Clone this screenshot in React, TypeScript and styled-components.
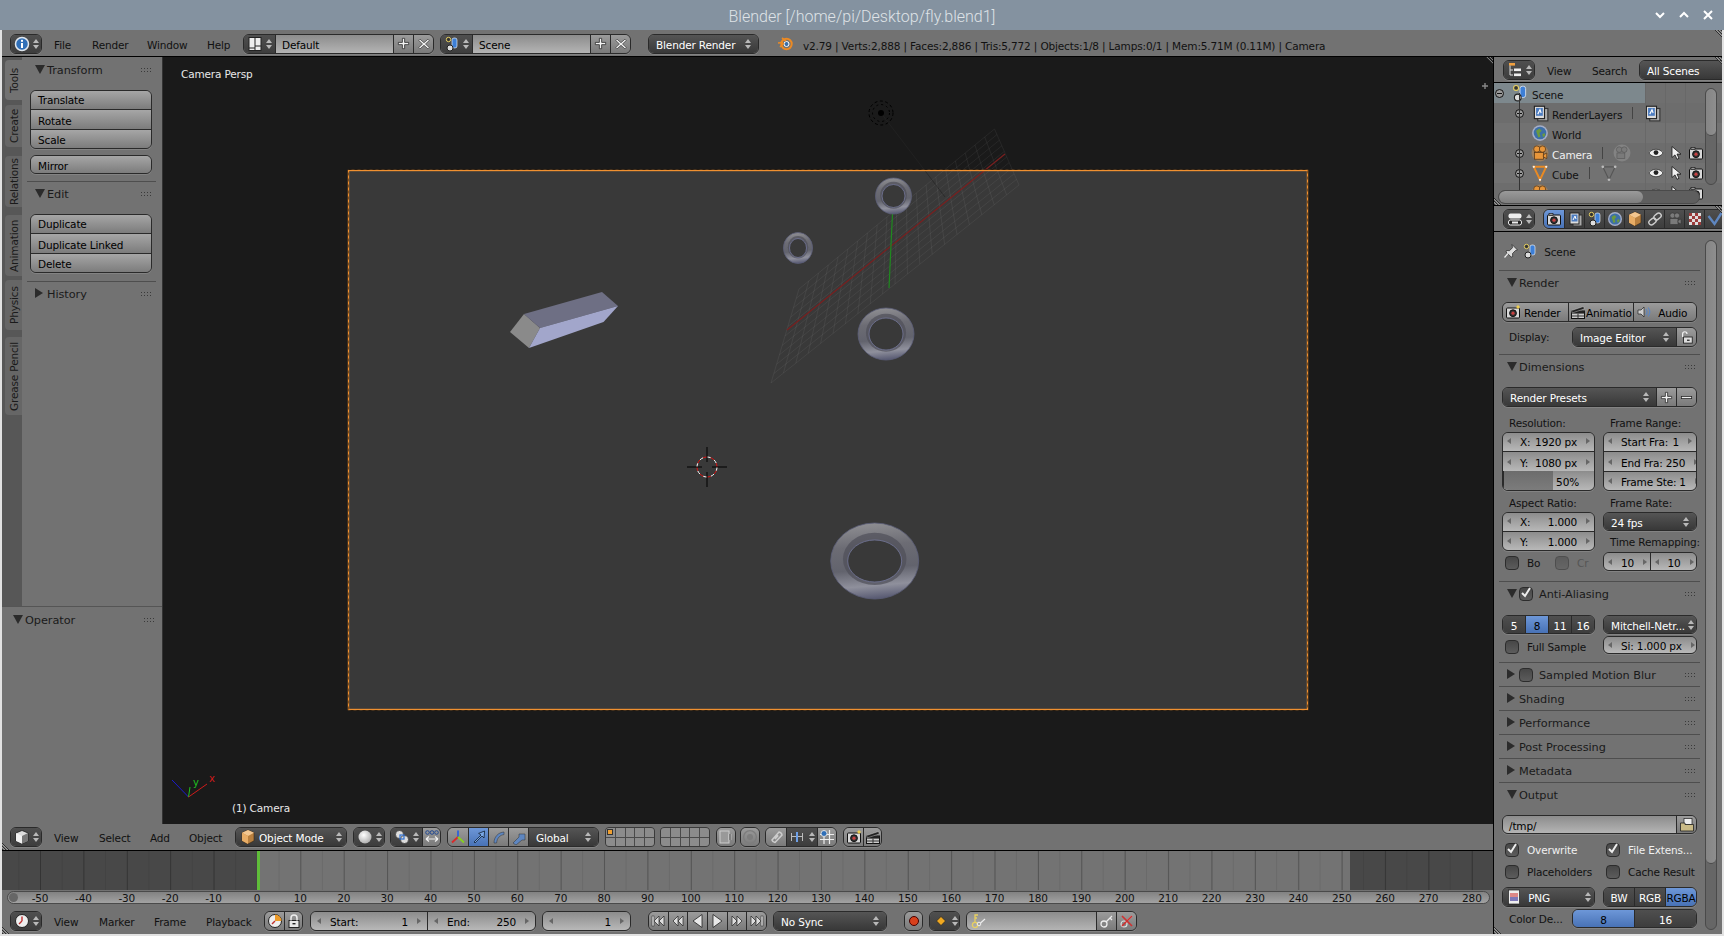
import React from 'react';
import styled, { createGlobalStyle, css } from 'styled-components';

const Global = createGlobalStyle`
  * { box-sizing: border-box; }
  html, body { margin: 0; padding: 0; overflow: hidden; background: #e2e2e2; }
  body { font-family: "DejaVu Sans", "Liberation Sans", sans-serif; font-size: 10.5px; letter-spacing: -0.15px; }
`;

const Page = styled.div`width:1724px;height:936px;display:flex;flex-direction:column;`;
const TitleBar = styled.header`
  height:30px;flex:none;background:#8492a0;display:flex;align-items:center;justify-content:center;position:relative;padding-top:2px;
  color:#dfe3e7;font:300 16px Roboto, sans-serif;letter-spacing:0;
`;
const WinButtons = styled.div`position:absolute;right:8px;top:9px;display:flex;gap:8px;`;
const Work = styled.div`flex:1;min-height:0;display:flex;flex-direction:column;padding:0 2px 2px 2px;`;
const Header = styled.div<{ $h?: number; $top?: number }>`
  height:${p => p.$h ?? 27}px;flex:none;display:flex;align-items:center;background:#727272;color:#000;
  border-bottom:1px solid #000;padding:${p => p.$top ?? 0}px 0 0 8px;position:relative;
  ${p => p.$h === 29 && css`border-bottom:none;`}
`;
const MenuItem = styled.div<{ $w: number }>`width:${p => p.$w}px;flex:none;padding:2px 0 0 12px;color:#111;white-space:nowrap;`;
const Gap = styled.div<{ $w: number }>`width:${p => p.$w}px;flex:none;`;
const Stats = styled.div`color:#111;white-space:nowrap;margin-left:10px;padding-top:4px;`;
const Body = styled.div`flex:1;min-height:0;display:flex;`;
const LeftCol = styled.div`width:1491px;flex:none;display:flex;flex-direction:column;`;
const RightCol = styled.div`flex:1;min-width:0;display:flex;flex-direction:column;border-left:1px solid #000;`;

const ViewArea = styled.div`flex:1;min-height:0;display:flex;`;
const Side = styled.div`width:160px;flex:none;display:flex;flex-direction:column;background:#727272;`;
const SideTop = styled.div`height:550px;flex:none;display:flex;border-bottom:1px solid #555;`;
const Tabs = styled.div`width:20px;flex:none;background:#575757;padding:3px 0 0 3px;display:flex;flex-direction:column;`;
const Tab = styled.div<{ $h: number; $on?: boolean; $mb: number }>`
  height:${p => p.$h}px;margin-bottom:${p => p.$mb}px;flex:none;writing-mode:vertical-rl;transform:rotate(180deg);
  display:flex;align-items:center;justify-content:center;color:#1a1a1a;border-radius:0 4px 4px 0;
  background:${p => (p.$on ? '#727272' : '#666')};
  ${p => p.$on && css`margin-right:-1px;`}
`;
const ToolPanels = styled.div`flex:1;padding:1px 6px 0 5px;`;
const Viewport = styled.main`flex:1;position:relative;background:#1a1a1a;overflow:hidden;border-left:1px solid #333;`;
const Scene3D = styled.svg`position:absolute;left:-1px;top:0;display:block;`;
const AxisLetter = styled.text`font-family:"DejaVu Sans",sans-serif;font-size:10px;letter-spacing:0;`;
const ViewLabel = styled.div<{ $x: number; $y: number }>`position:absolute;left:${p => p.$x}px;top:${p => p.$y}px;color:#e8e8e8;white-space:nowrap;`;

const Section = styled.section<{ $bare?: boolean }>`
  ${p => !p.$bare && css`border-bottom:1px solid #4e4e4e;`}
`;
const PanelHead = styled.div`height:23px;display:flex;align-items:center;color:#1a1a1a;font-size:11.3px;letter-spacing:-.05px;padding:1px 5px 0 8px;`;
const Tri = styled.span<{ $open?: boolean }>`
  width:0;height:0;flex:none;margin-top:-2px;
  ${p => p.$open
    ? css`border-left:5px solid transparent;border-right:5px solid transparent;border-top:9px solid #2b2b2b;margin-right:2px;`
    : css`border-top:5px solid transparent;border-bottom:5px solid transparent;border-left:8px solid #2b2b2b;margin-right:4px;`}
`;
const Grip = styled.span`
  margin-left:auto;width:11px;height:5px;flex:none;margin-top:-1px;
  background-image:radial-gradient(circle,#3a3a3a 0.8px,transparent 0.9px);background-size:3px 3px;
`;
const PanelBody = styled.div<{ $pad: string }>`padding:${p => p.$pad};display:flex;flex-direction:column;`;

const kinds: Record<string, any> = {
  tool: css`background:linear-gradient(#a6a6a6,#7c7c7c);color:#000;`,
  menu: css`background:linear-gradient(#555,#383838);color:#fff;`,
  num: css`background:linear-gradient(#8c8c8c,#b8b8b8);color:#000;`,
  text: css`background:linear-gradient(#8c8c8c,#b4b4b4);color:#000;`,
  toggle: css`background:linear-gradient(#9b9b9b,#7a7a7a);color:#000;`,
  dark: css`background:linear-gradient(#4f4f4f,#3d3d3d);color:#fff;`,
  active: css`background:linear-gradient(#6d97d8,#4872b6);color:#000;`,
};
const Join = styled.div<{ $col?: boolean; $w?: number; $ml?: number; $mt?: number; $mb?: number; $grow?: boolean }>`
  display:flex;flex-direction:${p => (p.$col ? 'column' : 'row')};flex:${p => (p.$grow ? 1 : 'none')};min-width:0;
  ${p => p.$w && css`width:${p.$w}px;`} margin-left:${p => p.$ml ?? 0}px;margin-top:${p => p.$mt ?? 0}px;margin-bottom:${p => p.$mb ?? 0}px;
  border:1px solid #2a2a2a;border-radius:6px;overflow:hidden;
  box-shadow:0 1px 0 rgba(255,255,255,.12);
`;
const Seg = styled.div<{ $k?: string; $w?: number; $h?: number; $grow?: boolean; $center?: boolean; $pad?: number }>`
  ${p => kinds[p.$k ?? 'tool']}
  height:${p => p.$h ?? 18}px;flex:${p => (p.$grow ? '1 1 0' : 'none')};min-width:0;${p => p.$w && css`width:${p.$w}px;`}
  display:flex;align-items:center;white-space:nowrap;overflow:hidden;position:relative;gap:3px;
  justify-content:${p => (p.$center ? 'center' : 'flex-start')};
  padding:${p => (p.$center ? '2px 0 0' : `2px ${p.$pad ?? 7}px 0`)};
  & + & {border-left:1px solid #2a2a2a;}
  ${Join}[data-col] > & {height:20px;flex:none;}
  ${Join}[data-col] > &:first-child {height:18px;padding-top:0;}
  ${Join}[data-col] > &:last-child {height:19px;}
  ${Join}[data-col] > & + & {border-left:none;border-top:1px solid #2a2a2a;}
`;
const Spin = styled.span`
  margin-left:auto;margin-top:-2px;flex:none;display:flex;flex-direction:column;gap:2px;
  &::before,&::after{content:"";width:0;height:0;border-left:3px solid transparent;border-right:3px solid transparent;}
  &::before{border-bottom:4px solid #b9b9b9;}
  &::after{border-top:4px solid #b9b9b9;}
`;
const Arr = styled.span<{ $r?: boolean }>`
  flex:none;width:0;height:0;margin-top:-2px;border-top:3px solid transparent;border-bottom:3px solid transparent;
  ${p => p.$r ? css`border-left:4px solid #666;margin-left:6px;` : css`border-right:4px solid #666;margin-right:6px;`}
`;
const NumVal = styled.span`margin-left:auto;position:relative;`;

const Outliner = styled.div`height:123px;flex:none;position:relative;overflow:hidden;background:#727272;border-bottom:1px solid #000;`;
const Row = styled.div<{ $alt?: boolean; $sel?: boolean }>`
  height:20px;display:flex;align-items:center;color:#111;position:relative;padding-top:2px;
  background:${p => (p.$sel ? 'linear-gradient(90deg,#7d888d 151px,#6f6f6f 151px)' : p.$alt ? '#6d6d6d' : '#727272')};
`;
const RowIndent = styled.div<{ $w: number }>`width:${p => p.$w}px;flex:none;display:flex;justify-content:flex-end;`;
const Expand = styled.span<{ $minus?: boolean }>`
  width:9px;height:9px;border-radius:50%;border:1px solid #111;background:#999;flex:none;position:relative;margin-top:-2px;
  &::before{content:"";position:absolute;left:1px;right:1px;top:3px;height:1px;background:#111;}
  ${p => !p.$minus && css`&::after{content:"";position:absolute;top:1px;bottom:1px;left:3px;width:1px;background:#111;}`}
`;
const RowText = styled.span<{ $white?: boolean }>`margin-left:3px;padding-top:2px;white-space:nowrap;color:${p => (p.$white ? '#f0f0f0' : '#111')};`;
const Tick = styled.span`width:1px;height:12px;background:#444;margin:-2px 10px 0;flex:none;`;
const RestrictCols = styled.div`position:absolute;left:151px;top:0;width:60px;height:100%;display:flex;`;
const Restrict = styled.div`width:20px;display:flex;align-items:center;justify-content:center;border-left:1px solid #686868;padding-top:2px;`;
const TreeLine = styled.div`position:absolute;left:25px;top:10px;width:1px;height:110px;background:#333;z-index:1;`;
const VScroll = styled.div<{ $top: number; $h: number; $thumb: number }>`
  position:absolute;right:5px;top:${p => p.$top}px;width:12px;height:${p => p.$h}px;border:1px solid #4a4a4a;border-radius:6px;background:#666;overflow:hidden;z-index:2;
  &::before{content:"";display:block;height:${p => p.$thumb}px;background:linear-gradient(90deg,#858585,#8e8e8e);border-radius:5px;border-bottom:1px solid #4a4a4a;}
`;
const HScroll = styled.div`
  position:absolute;left:4px;bottom:1px;width:202px;height:14px;border:1px solid #4a4a4a;border-radius:7px;background:#5e5e5e;overflow:hidden;z-index:2;
  &::before{content:"";display:block;width:144px;height:100%;background:linear-gradient(#9a9a9a,#7e7e7e);border-radius:6px;}
`;
const HeaderR = styled(Header)`padding-left:9px;height:26px;overflow:hidden;`;
const Props = styled.div`flex:1;min-height:0;position:relative;background:#727272;overflow:hidden;`;
const PropsInner = styled.div`width:201px;margin-left:5px;`;
const PinRow = styled.div`height:39px;display:flex;align-items:center;gap:3px;padding:2px 0 0 4px;color:#111;border-bottom:1px solid #4e4e4e;`;
const FormRow = styled.div<{ $mt?: number }>`display:flex;align-items:center;margin-top:${p => p.$mt ?? 0}px;`;
const Label = styled.div<{ $w?: number; $mt?: number }>`height:16px;display:flex;align-items:center;color:#111;padding:0 0 0 7px;white-space:nowrap;margin-top:${p => p.$mt ?? 0}px;${p => p.$w && css`width:${p.$w}px;flex:none;`}`;
const TwoCol = styled.div`display:grid;grid-template-columns:93px 94px;column-gap:8px;`;
const ColStack = styled.div`display:flex;flex-direction:column;`;
const CheckBox = styled.span<{ $dim?: boolean }>`
  width:14px;height:14px;flex:none;border-radius:4px;border:1px solid #2c2c2c;background:linear-gradient(#474747,#5c5c5c);position:relative;display:block;
  ${p => p.$dim && css`opacity:.5;`}
`;
const CheckLabel = styled.label<{ $w?: number; $white?: boolean; $dim?: boolean }>`
  display:flex;align-items:center;gap:8px;padding-left:3px;color:${p => (p.$white ? '#f0f0f0' : '#111')};${p => p.$w && css`width:${p.$w}px;flex:none;`}
  ${p => p.$dim && css`color:#555;`} white-space:nowrap;height:14px;
`;
const CheckMark = styled.svg`position:absolute;left:0;top:-1px;`;
const CheckWrap = styled.span<{ $mr?: number }>`position:relative;width:14px;height:14px;flex:none;display:block;margin-right:${p => p.$mr ?? 0}px;`;
const Fill = styled.div<{ $pct: number }>`position:absolute;left:0;top:0;bottom:0;width:${p => p.$pct}%;background:linear-gradient(#6c6c6c,#7c7c7c);`;
const LayerGrid = styled.div<{ $ml: number }>`
  display:grid;grid-template-columns:repeat(5,1fr);grid-auto-rows:1fr;width:50px;height:20px;margin-left:${p => p.$ml}px;flex:none;background:#4a4a4a;gap:1px;
  border:1px solid #3a3a3a;border-radius:4px;overflow:hidden;
`;
const LayerCell = styled.span<{ $on?: boolean }>`background:#8c8c8c;position:relative;${p => p.$on && css`&::after{content:"";position:absolute;left:1px;top:1px;width:4px;height:4px;background:#f0a030;border:1px solid #333;}`}`;

const TimelineBox = styled.div`height:39px;flex:none;display:flex;position:relative;background:#737373;`;
const Dim = styled.div<{ $w?: number }>`background:#484848;${p => (p.$w ? css`width:${p.$w}px;flex:none;` : css`flex:1;`)}`;
const FrameMark = styled.div`width:3px;flex:none;background:#5fbd3a;z-index:2;`;
const Lit = styled.div`width:1090px;flex:none;`;
const TimeGrid = styled.div`
  position:absolute;inset:0;pointer-events:none;
  background-image:linear-gradient(90deg,rgba(0,0,0,.22) 1px,transparent 1px),linear-gradient(90deg,rgba(0,0,0,.08) 1px,transparent 1px);
  background-size:43.4px 100%,21.7px 100%;background-position:38px 0,16.3px 0;
`;
const RulerWrap = styled.div`height:15px;flex:none;background:#727272;padding:1px 3px 1px 5px;`;
const Ruler = styled.div`
  height:13px;border:1px solid #4a4a4a;border-radius:7px;background:linear-gradient(#828282,#a2a2a2);display:flex;align-items:center;padding:1px 0 0 10.3px;overflow:hidden;position:relative;
  &::before{content:"";position:absolute;left:1px;top:1px;width:9px;height:9px;border-radius:50%;background:#666;}
`;
const RulerNum = styled.span`width:43.4px;flex:none;text-align:center;color:#111;`;
const Hatch = styled.svg<{ $pos: string }>`position:absolute;display:block;z-index:5;${p => p.$pos}`;
const IconSvg = styled.svg`flex:none;display:block;margin-top:-2px;`;
const OperatorPad = styled.div`padding:1px 3px 0;`;
const RowPad = styled.span`width:6px;flex:none;`;
const SpacedLabel = styled.div`height:21px;padding:3px 0 0 7px;display:flex;align-items:center;color:#111;white-space:nowrap;`;
const RemapLabel = styled.div`height:21px;padding:1px 0 0 7px;display:flex;align-items:center;color:#111;white-space:nowrap;`;
const CenterText = styled.span`flex:1;text-align:center;`;
const OverlapText = styled.span`margin-left:-3px;`;

const C = { blue: '#2f6fb8' };
const Icon = ({ n, s = 16 }: { n: string; s?: number }) => {
  const m: Record<string, React.ReactNode> = {
    info: <><circle cx="8" cy="8" r="6.5" fill={C.blue} stroke="#dfe6ee" strokeWidth="1.5" /><rect x="7" y="7" width="2" height="5" fill="#fff" /><rect x="7" y="3.8" width="2" height="2" fill="#fff" /></>,
    layout: <><rect x="2" y="1.5" width="12" height="13" fill="#eee" stroke="#222" /><path d="M8 1.5v13M8 10h6M2 12h6" stroke="#222" /></>,
    scene: <><circle cx="4.5" cy="3.5" r="2.2" fill="#333" stroke="#e8d060" /><rect x="8" y="2" width="5" height="10" rx="2" fill="#3d7fd6" stroke="#fff" strokeWidth=".6" /><circle cx="6" cy="12" r="3" fill="#ddd" stroke="#222" /></>,
    blender: <><circle cx="9.5" cy="9" r="5.2" fill="none" stroke="#ec8a24" strokeWidth="2" /><circle cx="9.5" cy="9" r="2.5" fill="#3a6ea8" stroke="#fff" /><path d="M1 8l5-.5M3 12l4-4M5 3l4 3" stroke="#ec8a24" strokeWidth="1.6" /></>,
    outliner: <><rect x="2" y="1" width="6" height="2.6" fill="#f0a040" /><path d="M3 3.5v9.5M3 8h3M3 13h3" stroke="#ddd" /><rect x="7" y="6.5" width="7" height="2.6" fill="#eee" /><rect x="7" y="11.5" width="7" height="2.6" fill="#eee" /></>,
    props: <><rect x="1.5" y="2.5" width="13" height="5" rx="2" fill="#eee" /><rect x="1.5" y="9" width="13" height="5" rx="2" fill="#222" stroke="#eee" /><rect x="5" y="10.5" width="6" height="2" fill="#eee" /></>,
    render: <><rect x="1.5" y="4" width="13" height="10" rx="1" fill="#d8d8d8" stroke="#111" /><rect x="3" y="2.5" width="4" height="2" fill="#999" stroke="#111" strokeWidth=".6" /><circle cx="8" cy="9.2" r="3.4" fill="#333" stroke="#111" /><circle cx="8" cy="9.2" r="1.6" fill="#c84040" /></>,
    renderstar: <><rect x="1.5" y="4" width="13" height="10" rx="1" fill="#d8d8d8" stroke="#111" /><circle cx="8" cy="9.2" r="3.4" fill="#333" stroke="#111" /><circle cx="8" cy="9.2" r="1.6" fill="#c84040" /><path d="M13 0.5l.8 1.7 1.7.8-1.7.8-.8 1.7-.8-1.7-1.7-.8 1.7-.8z" fill="#f6d24a" /></>,
    layers: <><rect x="6" y="4" width="9" height="11" fill="#aaa" stroke="#333" /><rect x="3" y="2" width="9" height="11" fill="#ddd" stroke="#222" /><rect x="4.5" y="3.5" width="6" height="7" fill="#4c7cc0" /><path d="M6 9l2-4 1 3" stroke="#fff" fill="none" /></>,
    world: <><circle cx="8" cy="8" r="7" fill="#a5aec8" /><circle cx="8" cy="8" r="5.6" fill="#3d6fa8" /><path d="M4.5 6l3-2 2 2-2 2 1 3-2 1-1-3z M10 9l2-1 .7 2-2 2z" fill="#6c9a3e" /></>,
    camera: <><circle cx="8" cy="8" r="7.5" fill="#e39a46" opacity=".4" /><circle cx="5.2" cy="4.5" r="2.8" fill="#e8963a" stroke="#4a2c10" strokeWidth=".6" /><circle cx="10.2" cy="4.5" r="2.8" fill="#e8963a" stroke="#4a2c10" strokeWidth=".6" /><rect x="3" y="7.5" width="8" height="6" fill="#e8963a" stroke="#4a2c10" strokeWidth=".6" /><path d="M11 9.5l3-1.5v5l-3-1.5z" fill="#e8963a" stroke="#4a2c10" strokeWidth=".6" /></>,
    cameraGhost: <g opacity=".5"><circle cx="8" cy="8" r="7.5" fill="#999" /><circle cx="5.5" cy="5" r="2.5" fill="#888" stroke="#444" strokeWidth=".6" /><circle cx="10" cy="5" r="2.5" fill="#888" stroke="#444" strokeWidth=".6" /><rect x="3.5" y="8" width="7" height="5" fill="#888" stroke="#444" strokeWidth=".6" /></g>,
    mesh: <><path d="M2.5 2.5h11L8 14z" fill="none" stroke="#e88a24" strokeWidth="1.8" /><circle cx="2.5" cy="2.5" r="1" fill="#eee" /><circle cx="13.5" cy="2.5" r="1" fill="#eee" /><circle cx="8" cy="14" r="1" fill="#eee" /></>,
    meshGhost: <><path d="M2.5 2.5h11L8 14z" fill="none" stroke="#555" /><circle cx="2.5" cy="2.5" r="1.2" fill="#bbb" /><circle cx="13.5" cy="2.5" r="1.2" fill="#bbb" /><circle cx="8" cy="14" r="1.2" fill="#bbb" /></>,
    eye: <><path d="M1 8c3-5 11-5 14 0-3 5-11 5-14 0z" fill="#f0f0f0" stroke="#222" strokeWidth=".7" /><circle cx="8" cy="7.6" r="2.4" fill="#222" /></>,
    cursor: <path d="M4 1.5v11l3-2.6 2 4.4 2-1-2-4.2h4z" fill="#f0f0f0" stroke="#111" strokeWidth=".8" />,
    cube: <><path d="M8 1l6 2.8v8L8 15l-6-3.2v-8z" fill="#b9803f" stroke="#3c2a14" strokeWidth=".6" /><path d="M2 3.8L8 7l6-3.2L8 1z" fill="#f2c690" /><path d="M8 7v8L2 11.8v-8z" fill="#e8ad66" /></>,
    link: <><rect x="1.5" y="8" width="8" height="5" rx="2.5" transform="rotate(-40 5.5 10.5)" fill="none" stroke="#ccc" strokeWidth="1.4" /><rect x="6.5" y="3" width="8" height="5" rx="2.5" transform="rotate(-40 10.5 5.5)" fill="none" stroke="#ccc" strokeWidth="1.4" /></>,
    modcam: <g opacity=".8"><circle cx="5.5" cy="4.5" r="2.6" fill="#888" stroke="#333" strokeWidth=".6" /><circle cx="10" cy="4.5" r="2.6" fill="#888" stroke="#333" strokeWidth=".6" /><rect x="3" y="7.5" width="8" height="6" fill="#888" stroke="#333" strokeWidth=".6" /><path d="M11 9.5l3-1.5v5l-3-1.5z" fill="#888" stroke="#333" strokeWidth=".6" /></g>,
    checker: <><rect x="2" y="2" width="12" height="12" fill="#ddd" /><path d="M2 2h3v3H2zM8 2h3v3H8zM5 5h3v3H5zM11 5h3v3h-3zM2 8h3v3H2zM8 8h3v3H8zM5 11h3v3H5zM11 11h3v3h-3z" fill="#9c3b3b" /></>,
    vee: <path d="M1.5 5l6 8 7-11" fill="none" stroke="#5e86c0" strokeWidth="2.4" />,
    pin: <><path d="M9 1.5l5.5 5.5-2 .5-3 3 .2 3-1.5.5L3 9l.5-1.5 3 .2 3-3z" fill="#ddd" stroke="#222" strokeWidth=".7" /><path d="M5 10.5L1.5 14.5" stroke="#eee" strokeWidth="1.2" /></>,
    clapper: <><rect x="1.5" y="7" width="13" height="7.5" fill="#ccc" stroke="#111" /><rect x="1.5" y="7" width="13" height="2.6" fill="#222" /><path d="M1.5 6.5l12-4 .8 2.4-12 4z" fill="#222" stroke="#ddd" strokeWidth=".4" /><path d="M1.5 12h13M8 9.6V14.5" stroke="#333" /></>,
    speaker: <><path d="M2 6h3l3-3v10L5 10H2z" fill="#cfcfcf" stroke="#222" strokeWidth=".7" /><path d="M10 5c1.4 2 1.4 4 0 6M12 3.5c2.4 3 2.4 6 0 9" fill="none" stroke="#5e86c0" strokeWidth="1.2" /></>,
    lockopen: <><rect x="4" y="8" width="10" height="7" fill="#ddd" stroke="#222" /><path d="M3 8V4.5a2.5 2.5 0 015 0" fill="none" stroke="#eee" strokeWidth="1.4" /><rect x="8" y="11" width="3" height="1.4" fill="#222" /></>,
    plusdark: <path d="M6.8 2.5h2.4v4.3h4.3v2.4H9.2v4.3H6.8V9.2H2.5V6.8h4.3z" fill="#f2f2f2" stroke="#222" strokeWidth=".8" />,
    minus: <rect x="2.5" y="6.8" width="11" height="2.4" fill="#eee" stroke="#222" strokeWidth=".8" />,
    x: <path d="M3.5 2.5L8 6.5l4.5-4 1.5 1.5-4.3 4 4.3 4-1.5 1.5L8 9.5l-4.5 4L2 12l4.3-4L2 4z" fill="#f2f2f2" stroke="#222" strokeWidth=".7" />,
    folder: <><rect x="5" y="1.5" width="8" height="6" fill="#eee" stroke="#222" strokeWidth=".7" /><path d="M1.5 6H6v1.5h8.5V14h-13z" fill="#c9ba86" stroke="#222" strokeWidth=".8" /></>,
    png: <><rect x="2.5" y="1" width="11" height="14" fill="#eee" stroke="#222" strokeWidth=".7" /><rect x="4" y="4" width="8" height="4" fill="#dd8888" /><rect x="4" y="8" width="8" height="4" fill="#7d78b8" /></>,
    view3d: <><path d="M8 1.5l6 2.5v8l-6 2.8L2 12V4z" fill="#ddd" stroke="#111" strokeWidth=".7" /><path d="M8 7v7.8L2 12V4z" fill="#f2f2f2" /><path d="M8 7l6-3v8l-6 2.8z" fill="#777" /></>,
    sphere: <><defs><radialGradient id="sph" cx=".4" cy=".35" r=".7"><stop offset="0" stopColor="#fff" /><stop offset="1" stopColor="#aaa" /></radialGradient></defs><circle cx="8" cy="8" r="6.5" fill="url(#sph)" /></>,
    pivot: <><circle cx="5.5" cy="5.5" r="4" fill="#ddd" stroke="#222" strokeWidth=".6" /><circle cx="10.5" cy="10.5" r="4" fill="#ddd" stroke="#222" strokeWidth=".6" /><rect x="6" y="6" width="4" height="4" fill="none" stroke="#3070d0" strokeWidth="1.2" /></>,
    alignCenter: <><circle cx="3.5" cy="3.5" r="1.8" fill="none" stroke="#244a90" /><circle cx="8" cy="3.5" r="1.8" fill="none" stroke="#244a90" /><circle cx="12.5" cy="3.5" r="1.8" fill="none" stroke="#244a90" /><path d="M2 10h12M2 10l3-2.5M2 10l3 2.5M14 10l-3-2.5M14 10l-3 2.5" stroke="#eee" fill="none" strokeWidth="1.2" /></>,
    axes: <><path d="M8 8V1.5" stroke="#2f62d8" strokeWidth="1.8" /><path d="M8 8l-6 5.5" stroke="#d82a2a" strokeWidth="1.8" /><path d="M8 8l6 5.5" stroke="#86d020" strokeWidth="1.8" /></>,
    move: <path d="M3 13l7-7-2.4-1.6 6-2.4-.6 7-2-2-7 7z" fill="#7aa8e8" stroke="#123" strokeWidth=".8" />,
    rotate: <path d="M3 14C3 8 7 3.5 13 3v2.6C9 6 6 9 5.6 14z" fill="#5e86c0" stroke="#333" strokeWidth=".5" />,
    scale: <path d="M2 14l6-6V5h6v6h-3l-6 5z" fill="#5e86c0" stroke="#333" strokeWidth=".5" />,
    lockcam: <><rect x="2" y="2" width="9" height="12" fill="#999" stroke="#ccc" /><path d="M12 5v6" stroke="#ddd" strokeWidth="2.6" /><path d="M12 5v6" stroke="#222" strokeWidth="1" /></>,
    prop: <><circle cx="8" cy="8" r="6.4" fill="none" stroke="#7d7d7d" strokeWidth="1.4" /><circle cx="8" cy="8" r="3" fill="#7d7d7d" /></>,
    magnet: <path d="M4 11L11 3a3.6 3.6 0 013 3l-7 7.5a3.5 3.5 0 01-3-2.5zM7 10l3.2-3.6" fill="none" stroke="#ccc" strokeWidth="1.6" />,
    snapinc: <><path d="M5 1v14M10.5 1v14M1 5.5h14M1 10.5h14" stroke="#eee" strokeWidth="1.2" /><circle cx="5" cy="4.5" r="3" fill="#2f6fb8" stroke="#ddd" /></>,
    snapel: <><rect x="2" y="7" width="12" height="1" fill="#bbb" /><path d="M2.5 4v8M13.5 4v8" stroke="#bbb" /><rect x="7" y="3" width="2" height="10" fill="#6ea0e8" /></>,
    clock: <><circle cx="8" cy="8" r="6.5" fill="#eee" stroke="#222" /><path d="M8 8V3.5M8 8l-3 3" stroke="#c03030" strokeWidth="1.4" /></>,
    preview: <><circle cx="8" cy="8" r="6.5" fill="#eee" stroke="#222" /><path d="M8 8V1.5a6.5 6.5 0 016.5 6.5z" fill="#ec9a28" /><path d="M8 8l-3 3" stroke="#c03030" strokeWidth="1.4" /></>,
    lock: <><rect x="3" y="7.5" width="10" height="7" fill="#e6e6e6" stroke="#222" /><path d="M5 7.5V5a3 3 0 016 0v2.5" fill="none" stroke="#eee" strokeWidth="1.5" /><rect x="6.5" y="10" width="3" height="1.4" fill="#222" /></>,
    first: <><rect x="2" y="3" width="2" height="10" fill="#ddd" stroke="#222" strokeWidth=".5" /><path d="M9 3v10L4 8zM14 3v10L9 8z" fill="#ddd" stroke="#222" strokeWidth=".7" /></>,
    prevk: <path d="M8 3v10L3 8zM13 3v10L8 8z" fill="#ddd" stroke="#222" strokeWidth=".7" />,
    back: <path d="M12 1.5v13L3 8z" fill="#e8e8e8" stroke="#222" strokeWidth=".8" />,
    play: <path d="M4 1.5v13L13 8z" fill="#e8e8e8" stroke="#222" strokeWidth=".8" />,
    nextk: <path d="M3 3v10l5-5zM8 3v10l5-5z" fill="#ddd" stroke="#222" strokeWidth=".7" />,
    last: <><rect x="12" y="3" width="2" height="10" fill="#ddd" stroke="#222" strokeWidth=".5" /><path d="M2 3v10l5-5zM7 3v10l5-5z" fill="#ddd" stroke="#222" strokeWidth=".7" /></>,
    rec: <circle cx="8" cy="8" r="4.5" fill="#d8401c" stroke="#400" />,
    keyd: <path d="M8 3.5L12.5 8 8 12.5 3.5 8z" fill="#f0a820" stroke="#222" strokeWidth=".7" />,
    keys: <><circle cx="5" cy="12" r="2.6" fill="none" stroke="#e8d060" strokeWidth="1.3" /><path d="M5 9.5V2h3M5 5h2" stroke="#e8d060" strokeWidth="1.3" fill="none" /><circle cx="9" cy="11" r="1.8" fill="none" stroke="#eee" /><path d="M10.5 10L15 6" stroke="#eee" strokeWidth="1.2" /></>,
    key: <><circle cx="5" cy="11" r="3" fill="none" stroke="#eee" strokeWidth="1.3" /><path d="M7 9l6-6M11 5l2 2" stroke="#eee" strokeWidth="1.3" /></>,
    keyx: <><circle cx="5" cy="11" r="3" fill="none" stroke="#ddd" strokeWidth="1.2" /><path d="M7 9l6-6" stroke="#ddd" strokeWidth="1.2" /><path d="M3 3l10 10M13 3L3 13" stroke="#d03030" strokeWidth="1.6" /></>,
  };
  return <IconSvg width={s} height={s} viewBox="0 0 16 16">{m[n]}</IconSvg>;
};

const Hatches = ({ pos, flip }: { pos: string; flip?: boolean }) => (
  <Hatch $pos={pos} width="9" height="9" viewBox="0 0 9 9">
    <path d={flip ? 'M0 2l7 7M0 5l4 4M0 8l1 1' : 'M2 0l7 7M5 0l4 4M8 0l1 1'} stroke="#2e2e2e" strokeWidth="1" />
    <path d={flip ? 'M0 3l6 6M0 6l3 3' : 'M3 0l6 6M6 0l3 3'} stroke="#aaa" strokeWidth=".7" />
  </Hatch>
);

const lerp = (a: number[], b: number[], t: number) => [a[0] + (b[0] - a[0]) * t, a[1] + (b[1] - a[1]) * t];
const PA = [770, 383], PB = [798, 289], PC = [993.5, 129], PD = [1018, 185];
const gridPath = (() => {
  let d = '';
  for (let i = 0; i <= 20; i++) { const p = lerp(PB, PC, i / 20), q = lerp(PA, PD, i / 20); d += `M${p[0]} ${p[1]}L${q[0]} ${q[1]}`; }
  for (let i = 0; i <= 10; i++) { const p = lerp(PA, PB, i / 10), q = lerp(PD, PC, i / 10); d += `M${p[0]} ${p[1]}L${q[0]} ${q[1]}`; }
  return d;
})();

const Torus = ({ x, y, rx, ry, ix, iy, id }: { x: number; y: number; rx: number; ry: number; ix: number; iy: number; id: string }) => (
  <g>
    <defs>
      <linearGradient id={id} x1=".45" y1="0" x2=".55" y2="1">
        <stop offset="0" stopColor="#8e8e92" /><stop offset=".3" stopColor="#6c6c74" /><stop offset=".6" stopColor="#62636d" /><stop offset=".82" stopColor="#8f909c" /><stop offset="1" stopColor="#555770" />
      </linearGradient>
    </defs>
    <ellipse cx={x} cy={y} rx={rx} ry={ry} fill={`url(#${id})`} stroke="#5c5e78" strokeWidth=".8" />
    <ellipse cx={x} cy={y - (ry - iy) * 0.12} rx={ix + (rx - ix) * 0.28} ry={iy + (ry - iy) * 0.3} fill="#4e4f58" opacity=".7" />
    <ellipse cx={x} cy={y} rx={ix} ry={iy} fill="#393939" stroke="#74779a" strokeWidth=".8" />
  </g>
);

const Scene = () => (
  <Scene3D width="1333" height="767" viewBox="161 57 1333 767">
    <rect x="347" y="170" width="960" height="540" fill="#393939" />
    <path d="M880 113L944 197" stroke="#242424" strokeWidth=".7" />
    <path d={gridPath} stroke="#fff" strokeOpacity=".075" strokeWidth=".8" fill="none" />
    <path d="M786 330L1004 154" stroke="#7a1f1f" strokeWidth="1.2" />
    <path d="M891.5 213L888 288" stroke="#1f8a1f" strokeWidth="1.2" />
    <rect x="347.5" y="170.5" width="959" height="539" fill="none" stroke="#f09030" strokeWidth="1.4" />
    <rect x="347.5" y="169.5" width="959" height="541" fill="none" stroke="#000" strokeWidth=".8" strokeDasharray="3 3" opacity=".55" />
    <circle cx="880" cy="113" r="12" fill="none" stroke="#000" strokeDasharray="3 2.5" />
    <circle cx="880" cy="113" r="8.5" fill="none" stroke="#000" strokeDasharray="2 3" />
    <circle cx="880" cy="113" r="3" fill="#000" />
    <path d="M509 332L523 314L539 328L528 348Z" fill="#8a8a8a" />
    <path d="M523 314L601 292L617 306L539 328Z" fill="#6e6f84" />
    <path d="M539 328L617 306L602.5 322L528 348Z" fill="#a2a6cb" />
    <Torus id="t1" x={892.5} y={196} rx={18} ry={18} ix={11.5} iy={11.5} />
    <Torus id="t2" x={797} y={248} rx={14.6} ry={15.5} ix={8.5} iy={9.5} />
    <Torus id="t3" x={885} y={334} rx={28} ry={26} ix={17} iy={16} />
    <Torus id="t4" x={873.7} y={561} rx={44} ry={38} ix={27} iy={21} />
    <circle cx="706" cy="467" r="10" fill="none" stroke="#fff" strokeDasharray="3.9 3.9" />
    <circle cx="706" cy="467" r="10" fill="none" stroke="#e01010" strokeDasharray="3.9 3.9" strokeDashoffset="3.9" />
    <path d="M686 467h15M711 467h15M706 447v15M706 472v15" stroke="#000" />
    <path d="M187.5 797L171 780" stroke="#1a1ad0" />
    <path d="M187.5 797L189 787" stroke="#20c020" />
    <path d="M187.5 797L206 784" stroke="#d01a1a" />
    <AxisLetter x="192" y="786" fill="#20c020">y</AxisLetter>
    <AxisLetter x="208" y="782" fill="#d01a1a">x</AxisLetter>
    <path d="M1481 86h6M1484 83v6" stroke="#888" strokeWidth="1.4" />
  </Scene3D>
);

const Box = ({ on, dim, mr }: { on?: boolean; dim?: boolean; mr?: number }) => (
  <CheckWrap $mr={mr}>
    <CheckBox $dim={dim} />
    {on && <CheckMark width="14" height="14" viewBox="0 0 14 14"><path d="M3 7l3 3 5-8" stroke="#eee" strokeWidth="2" fill="none" /></CheckMark>}
  </CheckWrap>
);
const Panel = ({ title, open, bare, children, pad, check }: any) => (
  <Section $bare={bare}>
    <PanelHead>
      <Tri $open={open} />
      {check !== undefined && <Box on={check} mr={6} />}
      <span>{title}</span>
      <Grip />
    </PanelHead>
    {children && <PanelBody $pad={pad}>{children}</PanelBody>}
  </Section>
);
const Check = ({ on, dim, white, w, children }: any) => (
  <CheckLabel $w={w} $white={white} $dim={dim}><Box on={on} dim={dim} />{children}</CheckLabel>
);
const Num = ({ label, val }: any) => (
  <Seg $k="num" $pad={4}><Arr /><span>{label}</span><NumVal>{val}</NumVal><Arr $r /></Seg>
);
const EditorBtn = ({ n }: { n: string }) => (
  <Join $w={32}><Seg $k="dark" $w={30} $pad={3}><Icon n={n} /><Spin /></Seg></Join>
);
const Col = (p: any) => <Join $col data-col="" {...p} />;

const rulerNums = Array.from({ length: 34 }, (_, i) => -50 + i * 10);
const outRows = [
  { t: 'RenderLayers', i: 'layers', exp: true, tail: 'layers', alt: true },
  { t: 'World', i: 'world' },
  { t: 'Camera', i: 'camera', exp: true, white: true, tail: 'cameraGhost', alt: true, restrict: true },
  { t: 'Cube', i: 'mesh', exp: true, tail: 'meshGhost', restrict: true },
  { t: '', i: 'camera', exp: false, alt: true, restrict: true },
];

export default function App() {
  return (
    <Page>
      <Global />
      <TitleBar>
        Blender [/home/pi/Desktop/fly.blend1]
        <WinButtons>
          <svg width="16" height="12" viewBox="0 0 16 12"><path d="M4 4l4 4 4-4" stroke="#fff" strokeWidth="2" fill="none" /></svg>
          <svg width="16" height="12" viewBox="0 0 16 12"><path d="M4 8l4-4 4 4" stroke="#fff" strokeWidth="2" fill="none" /></svg>
          <svg width="16" height="12" viewBox="0 0 16 12"><path d="M4 2l8 8M12 2l-8 8" stroke="#fff" strokeWidth="2" /></svg>
        </WinButtons>
      </TitleBar>
      <Work>
        <Header $top={1}>
          <Hatches pos="right:0;top:0;" />
          <EditorBtn n="info" />
          <MenuItem $w={38}>File</MenuItem><MenuItem $w={55}>Render</MenuItem><MenuItem $w={60}>Window</MenuItem><MenuItem $w={48}>Help</MenuItem>
          <Join $w={191}>
            <Seg $k="dark" $w={31} $pad={3}><Icon n="layout" /><Spin /></Seg>
            <Seg $k="text" $grow $pad={6}>Default</Seg>
            <Seg $k="toggle" $w={20} $center><Icon n="plusdark" s={15} /></Seg>
            <Seg $k="toggle" $w={20} $center><Icon n="x" s={14} /></Seg>
          </Join>
          <Gap $w={6} />
          <Join $w={191}>
            <Seg $k="dark" $w={31} $pad={3}><Icon n="scene" /><Spin /></Seg>
            <Seg $k="text" $grow $pad={6}>Scene</Seg>
            <Seg $k="toggle" $w={20} $center><Icon n="plusdark" s={15} /></Seg>
            <Seg $k="toggle" $w={20} $center><Icon n="x" s={14} /></Seg>
          </Join>
          <Gap $w={17} />
          <Join $w={111}><Seg $k="menu" $grow $pad={7}>Blender Render<Spin /></Seg></Join>
          <Gap $w={18} />
          <Icon n="blender" />
          <Stats>v2.79 | Verts:2,888 | Faces:2,886 | Tris:5,772 | Objects:1/8 | Lamps:0/1 | Mem:5.71M (0.11M) | Camera</Stats>
        </Header>
        <Body>
          <LeftCol>
            <ViewArea>
              <Side>
                <SideTop>
                  <Tabs>
                    <Tab $on $h={40} $mb={5}>Tools</Tab>
                    <Tab $h={42} $mb={9}>Create</Tab>
                    <Tab $h={51} $mb={8}>Relations</Tab>
                    <Tab $h={61} $mb={4}>Animation</Tab>
                    <Tab $h={50} $mb={7}>Physics</Tab>
                    <Tab $h={78} $mb={0}>Grease Pencil</Tab>
                  </Tabs>
                  <ToolPanels>
                    <Panel title="Transform" open pad="9px 4px 7px 3px">
                      <Col><Seg>Translate</Seg><Seg>Rotate</Seg><Seg>Scale</Seg></Col>
                      <Join $col $mt={6}><Seg $h={17}>Mirror</Seg></Join>
                    </Panel>
                    <Panel title="Edit" open pad="9px 4px 8px 3px">
                      <Col><Seg>Duplicate</Seg><Seg>Duplicate Linked</Seg><Seg>Delete</Seg></Col>
                    </Panel>
                    <Panel title="History" bare />
                  </ToolPanels>
                </SideTop>
                <OperatorPad>
                  <Panel title="Operator" open bare />
                </OperatorPad>
              </Side>
              <Viewport>
                <Scene />
                <ViewLabel $x={18} $y={11}>Camera Persp</ViewLabel>
                <ViewLabel $x={69} $y={745}>(1) Camera</ViewLabel>
                <Hatches pos="right:0;top:0;" />
              </Viewport>
            </ViewArea>
            <Header>
              <EditorBtn n="view3d" />
              <MenuItem $w={45}>View</MenuItem><MenuItem $w={51}>Select</MenuItem><MenuItem $w={39}>Add</MenuItem><MenuItem $w={58}>Object</MenuItem>
              <Join $w={112}><Seg $k="menu" $grow $pad={4}><Icon n="cube" />Object Mode<Spin /></Seg></Join>
              <Gap $w={6} />
              <Join $w={32}><Seg $k="dark" $w={30} $pad={3}><Icon n="sphere" /><Spin /></Seg></Join>
              <Gap $w={5} />
              <Join $w={51}>
                <Seg $k="dark" $w={31} $pad={3}><Icon n="pivot" /><Spin /></Seg>
                <Seg $k="toggle" $grow $center><Icon n="alignCenter" /></Seg>
              </Join>
              <Gap $w={6} />
              <Join $w={152}>
                <Seg $k="toggle" $w={20} $center><Icon n="axes" /></Seg>
                <Seg $k="active" $w={20} $center><Icon n="move" /></Seg>
                <Seg $k="toggle" $w={20} $center><Icon n="rotate" /></Seg>
                <Seg $k="toggle" $w={20} $center><Icon n="scale" /></Seg>
                <Seg $k="menu" $grow $pad={7}>Global<Spin /></Seg>
              </Join>
              <LayerGrid $ml={6}>{Array.from({ length: 10 }, (_, i) => <LayerCell key={i} $on={i === 0} />)}</LayerGrid>
              <LayerGrid $ml={5}>{Array.from({ length: 10 }, (_, i) => <LayerCell key={i} />)}</LayerGrid>
              <Join $w={20} $ml={6}><Seg $k="toggle" $grow $center><Icon n="lockcam" /></Seg></Join>
              <Join $w={20} $ml={4}><Seg $k="toggle" $grow $center><Icon n="prop" /></Seg></Join>
              <Join $w={72} $ml={5}>
                <Seg $k="toggle" $w={20} $center><Icon n="magnet" /></Seg>
                <Seg $k="dark" $w={31} $pad={2}><Icon n="snapel" /><Spin /></Seg>
                <Seg $k="toggle" $grow $center><Icon n="snapinc" /></Seg>
              </Join>
              <Join $w={39} $ml={6}>
                <Seg $k="toggle" $w={19} $center><Icon n="renderstar" /></Seg>
                <Seg $k="toggle" $grow $center><Icon n="clapper" /></Seg>
              </Join>
              <Hatches pos="left:0;bottom:0;" flip />
            </Header>
            <TimelineBox>
              <Dim $w={255} /><FrameMark /><Lit /><Dim />
              <TimeGrid />
            </TimelineBox>
            <RulerWrap>
              <Ruler>{rulerNums.map(n => <RulerNum key={n}>{n}</RulerNum>)}</Ruler>
            </RulerWrap>
            <Header $h={29} $top={2}>
              <EditorBtn n="clock" />
              <MenuItem $w={45}>View</MenuItem><MenuItem $w={55}>Marker</MenuItem><MenuItem $w={52}>Frame</MenuItem><MenuItem $w={70}>Playback</MenuItem>
              <Join $w={39}>
                <Seg $k="toggle" $w={19} $center><Icon n="preview" /></Seg>
                <Seg $k="toggle" $grow $center><Icon n="lock" /></Seg>
              </Join>
              <Join $w={226} $ml={7}>
                <Seg $k="num" $w={116} $pad={6}><Arr /><span>Start:</span><NumVal>1</NumVal><Arr $r /></Seg>
                <Seg $k="num" $grow $pad={6}><Arr /><span>End:</span><NumVal>250</NumVal><Arr $r /></Seg>
              </Join>
              <Join $w={89} $ml={6}><Seg $k="num" $grow $pad={6}><Arr /><NumVal>1</NumVal><Arr $r /></Seg></Join>
              <Join $w={119} $ml={17}>
                {['first', 'prevk', 'back', 'play', 'nextk', 'last'].map(n => <Seg key={n} $k="toggle" $grow $center><Icon n={n} /></Seg>)}
              </Join>
              <Join $w={114} $ml={6}><Seg $k="menu" $grow $pad={7}>No Sync<Spin /></Seg></Join>
              <Join $w={19} $ml={17}><Seg $k="toggle" $grow $center><Icon n="rec" /></Seg></Join>
              <Join $w={31} $ml={6}><Seg $k="dark" $grow $pad={3}><Icon n="keyd" /><Spin /></Seg></Join>
              <Join $w={171} $ml={6}>
                <Seg $k="text" $grow $pad={3}><Icon n="keys" /></Seg>
                <Seg $k="toggle" $w={20} $center><Icon n="key" /></Seg>
                <Seg $k="toggle" $w={20} $center><Icon n="keyx" /></Seg>
              </Join>
              <Hatches pos="left:0;bottom:0;" flip />
            </Header>
          </LeftCol>
          <RightCol>
            <HeaderR>
              <EditorBtn n="outliner" />
              <MenuItem $w={45}>View</MenuItem><MenuItem $w={59}>Search</MenuItem>
              <Join $w={100}><Seg $k="menu" $grow $pad={7}>All Scenes</Seg></Join>
              <Hatches pos="right:0;top:0;" />
            </HeaderR>
            <Outliner>
              <TreeLine />
              <Row $sel>
                <RowIndent $w={10}><Expand $minus /></RowIndent>
                <RowIndent $w={25}><Icon n="scene" s={18} /></RowIndent>
                <RowText>Scene</RowText>
                <RestrictCols><Restrict /><Restrict /><Restrict /></RestrictCols>
              </Row>
              {outRows.map((r, i) => (
                <Row key={i} $alt={r.alt}>
                  <RowIndent $w={30}>{r.exp ? <Expand /> : null}</RowIndent>
                  <RowIndent $w={25}><Icon n={r.i} s={18} /></RowIndent>
                  <RowText $white={r.white}>{r.t}</RowText>
                  {r.tail && <Tick />}
                  {r.tail && <Icon n={r.tail} s={18} />}
                  <RestrictCols>
                    <Restrict>{r.restrict && <Icon n="eye" />}</Restrict>
                    <Restrict>{r.restrict && <Icon n="cursor" />}</Restrict>
                    <Restrict>{r.restrict && <Icon n="render" />}</Restrict>
                  </RestrictCols>
                </Row>
              ))}
              <VScroll $top={5} $h={97} $thumb={46} />
              <HScroll />
              <Hatches pos="left:0;bottom:0;" flip />
            </Outliner>
            <HeaderR>
              <EditorBtn n="props" />
              <Gap $w={8} />
              <Join $w={190}>
                <Seg $k="active" $w={20} $center><Icon n="render" /></Seg>
                {['layers', 'scene', 'world', 'cube', 'link', 'modcam', 'checker', 'vee'].map(n => <Seg key={n} $k="dark" $w={20} $center><Icon n={n} /></Seg>)}
              </Join>
              <Hatches pos="right:0;top:0;" />
            </HeaderR>
            <Props>
              <PropsInner>
                <PinRow><Icon n="pin" /><Icon n="scene" /><span>&nbsp;Scene</span></PinRow>
                <Panel title="Render" open pad="8px 3px 7px">
                  <Join>
                    <Seg $k="toggle" $w={65} $pad={2}><Icon n="renderstar" />Render</Seg>
                    <Seg $k="toggle" $w={65} $pad={1}><Icon n="clapper" /><OverlapText>Animatio</OverlapText></Seg>
                    <Seg $k="toggle" $grow $pad={2}><Icon n="speaker" />&nbsp;Audio</Seg>
                  </Join>
                  <FormRow $mt={5}>
                    <Label $w={70}>Display:</Label>
                    <Join $grow>
                      <Seg $k="menu" $grow $pad={7}>Image Editor<Spin /></Seg>
                      <Seg $k="toggle" $w={20} $center><Icon n="lockopen" s={14} /></Seg>
                    </Join>
                  </FormRow>
                </Panel>
                <Panel title="Dimensions" open pad="9px 3px 10px">
                  <Join>
                    <Seg $k="menu" $grow $pad={7}>Render Presets<Spin /></Seg>
                    <Seg $k="toggle" $w={20} $center><Icon n="plusdark" s={15} /></Seg>
                    <Seg $k="toggle" $w={20} $center><Icon n="minus" s={15} /></Seg>
                  </Join>
                  <TwoCol>
                    <ColStack>
                      <Label $mt={8}>Resolution:</Label>
                      <Col $mt={1}>
                        <Num label="X:" val="1920 px" />
                        <Num label="Y:" val="1080 px" />
                        <Seg $k="num" $pad={6}><Fill $pct={54} /><NumVal>50%</NumVal><RowPad /></Seg>
                      </Col>
                      <SpacedLabel>Aspect Ratio:</SpacedLabel>
                      <Col>
                        <Num label="X:" val="1.000" />
                        <Num label="Y:" val="1.000" />
                      </Col>
                      <FormRow $mt={5}>
                        <Check w={50}>Bo</Check>
                        <Check dim>Cr</Check>
                      </FormRow>
                    </ColStack>
                    <ColStack>
                      <Label $mt={8}>Frame Range:</Label>
                      <Col $mt={1}>
                        <Num label="Start Fra:" val="1" />
                        <Num label="End Fra:" val="250" />
                        <Num label="Frame Ste:" val="1" />
                      </Col>
                      <SpacedLabel>Frame Rate:</SpacedLabel>
                      <Join><Seg $k="menu" $grow $h={17} $pad={7}>24 fps<Spin /></Seg></Join>
                      <RemapLabel>Time Remapping:</RemapLabel>
                      <Join>
                        <Seg $k="num" $grow $h={17} $pad={4}><Arr /><CenterText>10</CenterText><Arr $r /></Seg>
                        <Seg $k="num" $grow $h={17} $pad={4}><Arr /><CenterText>10</CenterText><Arr $r /></Seg>
                      </Join>
                    </ColStack>
                  </TwoCol>
                </Panel>
                <Panel title="Anti-Aliasing" open check pad="10px 3px 8px">
                  <TwoCol>
                    <Join>
                      <Seg $k="dark" $grow $h={17} $center>5</Seg>
                      <Seg $k="active" $grow $h={17} $center>8</Seg>
                      <Seg $k="dark" $grow $h={17} $center>11</Seg>
                      <Seg $k="dark" $grow $h={17} $center>16</Seg>
                    </Join>
                    <Join><Seg $k="menu" $grow $h={17} $pad={7}>Mitchell-Netr...<Spin /></Seg></Join>
                  </TwoCol>
                  <TwoCol>
                    <FormRow $mt={5}><Check>Full Sample</Check></FormRow>
                    <Join $mt={2}><Seg $k="num" $grow $h={16} $pad={4}><Arr /><CenterText>Si: 1.000 px</CenterText><Arr $r /></Seg></Join>
                  </TwoCol>
                </Panel>
                <Panel title="Sampled Motion Blur" check={false} />
                <Panel title="Shading" />
                <Panel title="Performance" />
                <Panel title="Post Processing" />
                <Panel title="Metadata" />
                <Panel title="Output" open bare pad="9px 3px 0">
                  <Join>
                    <Seg $k="text" $grow $h={17} $pad={6}>/tmp/</Seg>
                    <Seg $k="toggle" $w={20} $h={17} $center><Icon n="folder" /></Seg>
                  </Join>
                  <TwoCol>
                    <FormRow $mt={9}><Check on white>Overwrite</Check></FormRow>
                    <FormRow $mt={9}><Check on white>File Extens...</Check></FormRow>
                    <FormRow $mt={8}><Check>Placeholders</Check></FormRow>
                    <FormRow $mt={8}><Check>Cache Result</Check></FormRow>
                  </TwoCol>
                  <TwoCol>
                    <Join $mt={8}><Seg $k="menu" $grow $pad={3}><Icon n="png" />&nbsp;PNG<Spin /></Seg></Join>
                    <Join $mt={8}>
                      <Seg $k="dark" $w={30} $center>BW</Seg>
                      <Seg $k="dark" $w={31} $center>RGB</Seg>
                      <Seg $k="active" $grow $center>RGBA</Seg>
                    </Join>
                  </TwoCol>
                  <FormRow $mt={2}>
                    <Label $w={70}>Color De...</Label>
                    <Join $grow>
                      <Seg $k="active" $grow $h={17} $center>8</Seg>
                      <Seg $k="dark" $grow $h={17} $center>16</Seg>
                    </Join>
                  </FormRow>
                </Panel>
              </PropsInner>
              <VScroll $top={8} $h={690} $thumb={622} />
              <Hatches pos="left:0;bottom:0;" flip />
            </Props>
          </RightCol>
        </Body>
      </Work>
    </Page>
  );
}
